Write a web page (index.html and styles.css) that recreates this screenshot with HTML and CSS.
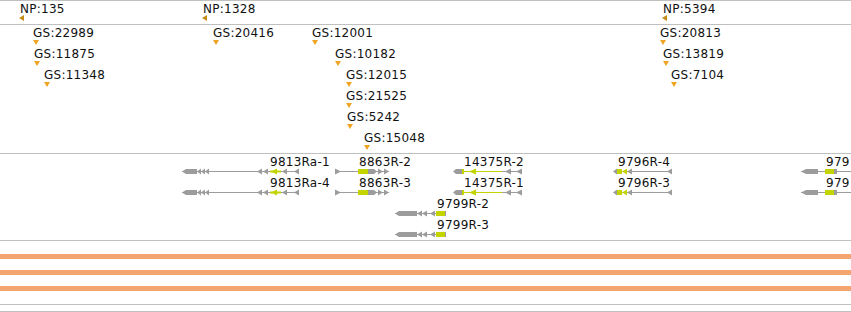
FILE: index.html
```html
<!DOCTYPE html>
<html lang="en">
<head>
  <meta charset="UTF-8">
  <title>Tracks</title>
  <link rel="stylesheet" href="styles.css">
</head>
<body>
<div class="browser">
  <!-- NP track -->
  <div class="track np">
    <div class="feat" style="left:20px;top:1px"><span class="lbl">NP:135</span><i class="mark left"></i></div>
    <div class="feat" style="left:203px;top:1px"><span class="lbl">NP:1328</span><i class="mark left"></i></div>
    <div class="feat" style="left:663px;top:1px"><span class="lbl">NP:5394</span><i class="mark left"></i></div>
  </div>

  <!-- GS track, rows every 21px -->
  <div class="track gs">
    <div class="feat" style="left:33px;top:1px"><span class="lbl">GS:22989</span><i class="mark down"></i></div>
    <div class="feat" style="left:34px;top:22px"><span class="lbl">GS:11875</span><i class="mark down"></i></div>
    <div class="feat" style="left:44px;top:43px"><span class="lbl">GS:11348</span><i class="mark down"></i></div>
    <div class="feat" style="left:213px;top:1px"><span class="lbl">GS:20416</span><i class="mark down"></i></div>
    <div class="feat" style="left:312px;top:1px"><span class="lbl">GS:12001</span><i class="mark down"></i></div>
    <div class="feat" style="left:335px;top:22px"><span class="lbl">GS:10182</span><i class="mark down"></i></div>
    <div class="feat" style="left:346px;top:43px"><span class="lbl">GS:12015</span><i class="mark down"></i></div>
    <div class="feat" style="left:346px;top:64px"><span class="lbl">GS:21525</span><i class="mark down"></i></div>
    <div class="feat" style="left:347px;top:85px"><span class="lbl">GS:5242</span><i class="mark down"></i></div>
    <div class="feat" style="left:364px;top:106px"><span class="lbl">GS:15048</span><i class="mark down"></i></div>
    <div class="feat" style="left:660px;top:1px"><span class="lbl">GS:20813</span><i class="mark down"></i></div>
    <div class="feat" style="left:663px;top:22px"><span class="lbl">GS:13819</span><i class="mark down"></i></div>
    <div class="feat" style="left:671px;top:43px"><span class="lbl">GS:7104</span><i class="mark down"></i></div>
  </div>

  <!-- gene models -->
  <div class="track genes">
    <svg class="models" width="851" height="86" viewBox="0 0 851 86">
      <defs>
        <g id="g9813">
          <line x1="182" x2="299" y1="0" y2="0"/>
          <polygon points="182,0 186,-2.5 197,-2.5 197,2.5 186,2.5"/>
          <polygon points="197,0 201,-3 201,3"/>
          <polygon points="201,0 205,-3 205,3"/>
          <polygon points="205,0 209,-3 209,3"/>
          <polygon points="257,0 262,-3 262,3"/>
          <polygon points="263,0 268,-3 268,3"/>
          <rect class="y" x="270" y="-1" width="11" height="2"/>
          <polygon class="y" points="271,0 277,-3 277,3"/>
          <polygon points="282,0 287,-3 287,3"/>
          <polygon points="294,0 299,-3 299,3"/>
        </g>
        <g id="g8863">
          <line x1="335" x2="389" y1="0" y2="0"/>
          <polygon points="335,-3 341,0 335,3"/>
          <rect class="y" x="358" y="-2.5" width="10" height="5"/>
          <polygon points="368,-2.5 374,-2.5 377,0 374,2.5 368,2.5"/>
          <polygon points="378,-3 383,0 378,3"/>
          <polygon points="384,-3 389,0 384,3"/>
        </g>
        <g id="g14375">
          <line x1="502" x2="522" y1="0" y2="0"/>
          <line class="y" x1="464" x2="502" y1="0" y2="0"/>
          <polygon points="453,0 456,-2.5 462,-2.5 462,2.5 456,2.5"/>
          <rect class="y" x="462" y="-2.5" width="2" height="5"/>
          <polygon class="y" points="469,0 476,-3 476,3"/>
          <polygon points="505,0 511,-3 511,3"/>
          <polygon points="516,0 522,-3 522,3"/>
        </g>
        <g id="g9799">
          <line x1="395" x2="446" y1="0" y2="0"/>
          <polygon points="395,0 399,-2.5 417,-2.5 417,2.5 399,2.5"/>
          <polygon points="417,0 422,-3 422,3"/>
          <polygon points="422,0 427,-3 427,3"/>
          <polygon points="430,0 435,-3 435,3"/>
          <rect class="y" x="436" y="-2.5" width="9" height="5"/>
          <rect x="445" y="-2.5" width="1" height="5"/>
        </g>
        <g id="g9796">
          <line x1="614" x2="672" y1="0" y2="0"/>
          <polygon points="613,0 617,-3 617,3"/>
          <rect class="y" x="617" y="-2.5" width="5" height="5"/>
          <polygon class="y" points="622,0 627,-3 627,3"/>
          <polygon points="627,0 632,-3 632,3"/>
          <polygon points="667,0 672,-3 672,3"/>
        </g>
        <g id="g9797">
          <line x1="801" x2="851" y1="0" y2="0"/>
          <polygon points="801,0 806,-2.5 818,-2.5 818,2.5 806,2.5"/>
          <rect class="y" x="825" y="-2.5" width="9" height="5"/>
          <rect x="834" y="-2.5" width="3" height="5"/>
        </g>
      </defs>
      <use href="#g9813" y="17.5"/>
      <use href="#g8863" y="17.5"/>
      <use href="#g14375" y="17.5"/>
      <use href="#g9796" y="17.5"/>
      <use href="#g9797" y="17.5"/>
      <use href="#g9813" y="38.5"/>
      <use href="#g8863" y="38.5"/>
      <use href="#g14375" y="38.5"/>
      <use href="#g9796" y="38.5"/>
      <use href="#g9797" y="38.5"/>
      <use href="#g9799" y="59.5"/>
      <use href="#g9799" y="80.5"/>
    </svg>
    <span class="glbl" style="left:270px;top:1px">9813Ra-1</span>
    <span class="glbl" style="left:359px;top:1px">8863R-2</span>
    <span class="glbl" style="left:464px;top:1px">14375R-2</span>
    <span class="glbl" style="left:618px;top:1px">9796R-4</span>
    <span class="glbl" style="left:826px;top:1px">979</span>
    <span class="glbl" style="left:270px;top:22px">9813Ra-4</span>
    <span class="glbl" style="left:359px;top:22px">8863R-3</span>
    <span class="glbl" style="left:464px;top:22px">14375R-1</span>
    <span class="glbl" style="left:618px;top:22px">9796R-3</span>
    <span class="glbl" style="left:826px;top:22px">979</span>
    <span class="glbl" style="left:437px;top:43px">9799R-2</span>
    <span class="glbl" style="left:437px;top:64px">9799R-3</span>
  </div>

  <!-- coverage bars -->
  <div class="track bars">
    <div class="bar"></div>
    <div class="bar"></div>
    <div class="bar"></div>
  </div>
  <div class="track spacer"></div>
  <div class="track end"></div>
</div>
</body>
</html>
```

FILE: styles.css
```css
body {
  margin: 0;
  overflow: hidden;
  background: #fff;
  color: #111;
  font: 12px/14px "DejaVu Sans", "Liberation Sans", sans-serif;
  letter-spacing: 0.25px;
}

.browser {
  width: 851px;
}

.track {
  position: relative;
  border-top: 1px solid #c0c0c0;
  overflow: hidden;
}

.np {
  height: 23px;
}

.gs {
  height: 128px;
}

.genes {
  height: 86px;
}

.bars {
  display: flex;
  flex-direction: column;
  gap: 11px;
  padding: 13px 0;
}

.bar {
  height: 5px;
  background: #f4a46f;
}

.spacer {
  height: 6px;
}

.end {
  height: 0;
}

.feat {
  position: absolute;
  white-space: nowrap;
}

.lbl {
  display: block;
}

.mark {
  display: block;
  width: 0;
  height: 0;
}

.mark.down {
  border-left: 3px solid transparent;
  border-right: 3px solid transparent;
  border-top: 5px solid #f0a423;
}

.mark.left {
  margin: -1px 0 0 -1px;
  border-top: 3px solid transparent;
  border-bottom: 3px solid transparent;
  border-right: 5px solid #c48c14;
}

.models {
  display: block;
}

.models line {
  stroke: #9c9c9c;
  stroke-width: 1;
}

.models line.y {
  stroke: #c3d400;
}

.models polygon,
.models rect {
  fill: #9c9c9c;
}

.models .y {
  fill: #c3d400;
}

.glbl {
  position: absolute;
  white-space: nowrap;
}
```
